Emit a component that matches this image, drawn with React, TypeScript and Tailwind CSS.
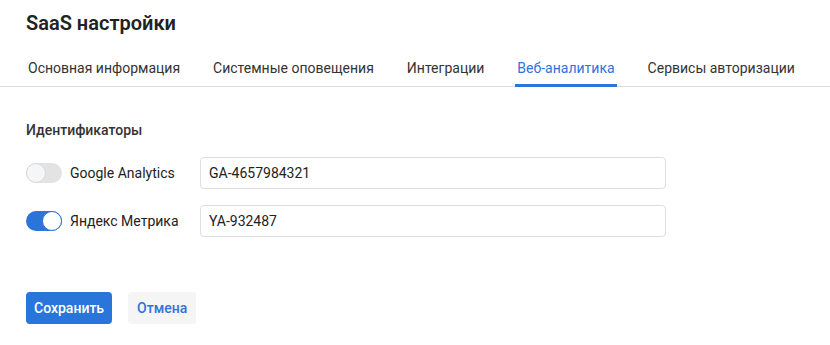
import { useState } from 'react'

const tabs = ['Основная информация', 'Системные оповещения', 'Интеграции', 'Веб-аналитика', 'Сервисы авторизации']

function Toggle({ on, onClick }: { on: boolean; onClick: () => void }) {
  return (
    <button
      onClick={onClick}
      className={`relative h-5 w-9 shrink-0 rounded-full ${on ? 'bg-[#2d74da]' : 'bg-[#e3e3e3]'}`}
    >
      <span
        className={`absolute top-0 h-5 w-5 rounded-full border ${
          on ? 'right-0 border-[#2d74da] bg-white' : 'left-0 border-[#d8d8d8] bg-[#f5f6f8]'
        }`}
      />
    </button>
  )
}

export default function App() {
  const [ga, setGa] = useState(false)
  const [ym, setYm] = useState(true)

  return (
    <div className="h-[345px] w-[830px] overflow-hidden bg-white text-[#222] font-['Roboto',sans-serif]">
      <h1 className="px-[26px] pt-[9px] text-[20px] font-semibold leading-[28px]">SaaS настройки</h1>

      <div className="mt-[21px] flex gap-[29px] border-b border-[#dcdcdc] px-[26px]">
        {tabs.map((t, i) => (
          <div
            key={t}
            className={`-mb-px shrink-0 whitespace-nowrap px-[2px] pb-[6px] text-[14px] leading-[20px] ${
              i === 3 ? 'border-b-[3px] border-[#2d74da] text-[#2d74da]' : 'border-b-[3px] border-transparent text-[#333]'
            }`}
          >
            {t}
          </div>
        ))}
      </div>

      <div className="px-[26px] pt-[33px]">
        <div className="text-[14px] font-medium leading-[20px] text-[#333]">Идентификаторы</div>

        <div className="mt-[17px] flex flex-col gap-[16px]">
          <div className="flex items-center">
            <Toggle on={ga} onClick={() => setGa(!ga)} />
            <span className="ml-[8px] w-[130px] text-[14px] text-[#222]">Google Analytics</span>
            <input
              defaultValue="GA-4657984321"
              className="h-[32px] w-[466px] rounded border border-[#dedede] px-[8px] text-[14px] text-[#222] outline-none"
            />
          </div>
          <div className="flex items-center">
            <Toggle on={ym} onClick={() => setYm(!ym)} />
            <span className="ml-[8px] w-[130px] text-[14px] text-[#222]">Яндекс Метрика</span>
            <input
              defaultValue="YA-932487"
              className="h-[32px] w-[466px] rounded border border-[#dedede] px-[8px] text-[14px] text-[#222] outline-none"
            />
          </div>
        </div>

        <div className="mt-[55px] flex gap-[16px]">
          <button className="h-[32px] rounded bg-[#2a75da] px-[8px] text-[14px] font-medium text-white">Сохранить</button>
          <button className="h-[32px] rounded bg-[#f5f5f5] px-[9px] text-[14px] font-medium text-[#2d74da]">Отмена</button>
        </div>
      </div>
    </div>
  )
}
